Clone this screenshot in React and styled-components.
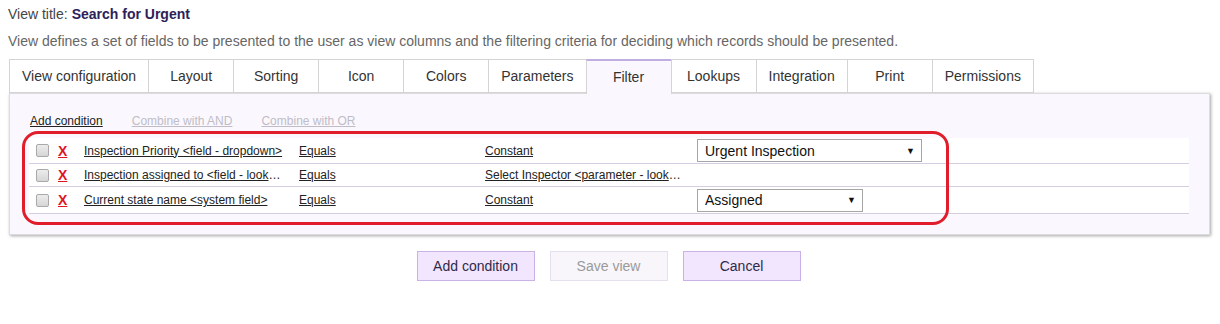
import React from 'react'
import styled, { createGlobalStyle } from 'styled-components'

const GlobalStyle = createGlobalStyle`
  body {
    margin: 0;
    background: #fff;
    font-family: "Liberation Sans", Arial, sans-serif;
    color: #333;
  }
`

const Page = styled.div`
  padding: 6px 10px 0 9px;
`
const TitleLine = styled.div`
  font-size: 14px;
  line-height: 16px;
  color: #444;
  margin-left: -1px;
`
const TitleValue = styled.b`
  color: #2d2158;
  margin-left: 4px;
`
const Description = styled.div`
  font-size: 14px;
  line-height: 17px;
  color: #666;
  margin: 11px 0 0 -1px;
`
const TabBar = styled.div`
  display: flex;
  margin-top: 9px;
  position: relative;
  z-index: 1;
`
const Tab = styled.div`
  min-width: 86px;
  box-sizing: border-box;
  padding: 0 12px;
  height: ${p => (p.active ? '35px' : '34px')};
  line-height: 33px;
  text-align: center;
  font-size: 14px;
  color: #333;
  background: ${p => (p.active ? '#faf8fe' : '#fff')};
  border: 1px solid #d4d4d4;
  border-top: ${p => (p.active ? '2px solid #bfaee0' : '1px solid #d4d4d4')};
  border-bottom: ${p => (p.active ? 'none' : '1px solid #d4d4d4')};
  margin-left: -1px;
  &:first-child {
    margin-left: 0;
  }
`
const Panel = styled.div`
  position: relative;
  margin-top: -1px;
  width: 1201px;
  box-sizing: border-box;
  background: #faf8fe;
  border: 1px solid #dcdcdc;
  box-shadow: 1px 1px 3px rgba(0, 0, 0, 0.35);
  padding: 20px 20px 20px 19px;
`
const Actions = styled.div`
  display: flex;
  gap: 29px;
  font-size: 12px;
  line-height: 14px;
  padding-left: 1px;
`
const ActionLink = styled.span`
  text-decoration: underline;
  color: ${p => (p.disabled ? '#c0bcc6' : '#222')};
`
const Rows = styled.div`
  margin-top: 10px;
  background: #fff;
`
const Row = styled.div`
  display: grid;
  grid-template-columns: 28px 27px 215px 186px 212px 1fr;
  align-items: center;
  height: ${p => p.h}px;
  border-bottom: 1px solid #d6cde3;
  font-size: 12px;
  color: #222;
`
const Check = styled.span`
  display: block;
  width: 11px;
  height: 11px;
  margin-left: 7px;
  border: 1px solid #a9a9a9;
  border-radius: 2px;
  background: linear-gradient(#ececec, #d6d6d6);
`
const Remove = styled.span`
  color: #e0141e;
  font-weight: bold;
  font-size: 14px;
  text-decoration: underline;
  padding-left: 1px;
`
const CellLink = styled.span`
  text-decoration: underline;
  white-space: nowrap;
  overflow: hidden;
  text-overflow: ellipsis;
  padding-right: 16px;
`
const Select = styled.div`
  display: flex;
  align-items: center;
  justify-content: space-between;
  box-sizing: border-box;
  width: ${p => p.w}px;
  height: 23px;
  padding: 0 6px 0 7px;
  border: 1px solid #a6a6a6;
  background: #fff;
  font-size: 14px;
  color: #111;
`
const Caret = styled.span`
  font-size: 9px;
  color: #111;
`
const Highlight = styled.div`
  position: absolute;
  left: 12px;
  top: 37px;
  width: 927px;
  height: 94px;
  box-sizing: border-box;
  border: 3px solid #e11d2b;
  border-radius: 16px;
  pointer-events: none;
`
const ButtonBar = styled.div`
  display: flex;
  justify-content: center;
  gap: 15px;
  margin-top: 16px;
  padding-right: 2px;
`
const Button = styled.div`
  width: 118px;
  height: 30px;
  box-sizing: border-box;
  line-height: 28px;
  text-align: center;
  font-size: 14px;
  color: ${p => (p.disabled ? '#9a9a9a' : '#2f2a4a')};
  background: ${p => (p.disabled ? '#f8f6fb' : '#f1e6fd')};
  border: 1px solid ${p => (p.disabled ? '#e6e0ee' : '#c8b2e6')};
`

const tabs = [
  'View configuration',
  'Layout',
  'Sorting',
  'Icon',
  'Colors',
  'Parameters',
  'Filter',
  'Lookups',
  'Integration',
  'Print',
  'Permissions'
]

const conditions = [
  {
    field: 'Inspection Priority <field - dropdown>',
    op: 'Equals',
    source: 'Constant',
    value: 'Urgent Inspection',
    width: 225,
    h: 25
  },
  {
    field: 'Inspection assigned to <field - lookup>',
    op: 'Equals',
    source: 'Select Inspector <parameter - lookup>',
    h: 22
  },
  {
    field: 'Current state name <system field>',
    op: 'Equals',
    source: 'Constant',
    value: 'Assigned',
    width: 166,
    h: 26
  }
]

export default function App() {
  return (
    <Page>
      <GlobalStyle />
      <TitleLine>
        View title:<TitleValue>Search for Urgent</TitleValue>
      </TitleLine>
      <Description>
        View defines a set of fields to be presented to the user as view columns and the filtering
        criteria for deciding which records should be presented.
      </Description>
      <TabBar>
        {tabs.map(t => (
          <Tab key={t} active={t === 'Filter'}>
            {t}
          </Tab>
        ))}
      </TabBar>
      <Panel>
        <Actions>
          <ActionLink>Add condition</ActionLink>
          <ActionLink disabled>Combine with AND</ActionLink>
          <ActionLink disabled>Combine with OR</ActionLink>
        </Actions>
        <Rows>
          {conditions.map((c, i) => (
            <Row key={i} h={c.h}>
              <Check />
              <Remove>X</Remove>
              <CellLink>{c.field}</CellLink>
              <CellLink>{c.op}</CellLink>
              <CellLink>{c.source}</CellLink>
              <div>
                {c.value && (
                  <Select w={c.width}>
                    {c.value}
                    <Caret>▼</Caret>
                  </Select>
                )}
              </div>
            </Row>
          ))}
        </Rows>
        <Highlight />
      </Panel>
      <ButtonBar>
        <Button>Add condition</Button>
        <Button disabled>Save view</Button>
        <Button>Cancel</Button>
      </ButtonBar>
    </Page>
  )
}
